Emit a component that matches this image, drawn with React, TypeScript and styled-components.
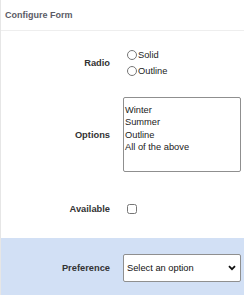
import styled, { createGlobalStyle } from "styled-components"

const GlobalStyle = createGlobalStyle`
  html, body {
    margin: 0;
    padding: 0;
    background: #ffffff;
  }
  body {
    font-family: "Liberation Sans", Arial, sans-serif;
    color: #333333;
  }
`

const Panel = styled.div`
  width: 244px;
  height: 295px;
  box-sizing: border-box;
  border-left: 1px solid #e6e6e6;
  display: flex;
  flex-direction: column;
  overflow: hidden;
`

const PanelHeader = styled.div`
  height: 30px;
  flex-shrink: 0;
  display: flex;
  align-items: center;
  padding: 0 4px;
  border-bottom: 1px solid #eeeeee;
  font-size: 9px;
  font-weight: bold;
  color: #5b5b66;
`

const Row = styled.div<{ $pt: number; $pb: number }>`
  display: grid;
  grid-template-columns: 109px 118px;
  column-gap: 13px;
  align-items: center;
  padding: ${(p) => p.$pt}px 0 ${(p) => p.$pb}px;
`

const Shaded = styled.div`
  flex: 1;
  background: #d2e0f5;
`

const Label = styled.label`
  text-align: right;
  font-size: 9.3px;
  font-weight: bold;
  color: #333333;
`

const RadioGroup = styled.div`
  display: flex;
  flex-direction: column;
  gap: 4px;
`

const RadioOption = styled.label`
  display: flex;
  align-items: center;
  font-size: 9.3px;
  color: #222;
  height: 12px;

  input {
    width: 10px;
    height: 10px;
    margin: 0 1px 0 4px;
  }
`

const ListBox = styled.select`
  width: 118px;
  height: 75px;
  box-sizing: border-box;
  padding: 6px 0;
  border: 1px solid #8f8f8f;
  border-radius: 2px;
  font-family: "Liberation Sans", Arial, sans-serif;
  font-size: 9.3px;
  color: #222;
  overflow: hidden;
  outline: none;

  option {
    padding: 1px 1px 0.3px;
  }
`

const CheckCell = styled.div`
  height: 24px;
  display: flex;
  align-items: center;
`

const Check = styled.input`
  width: 10px;
  height: 10px;
  margin: 0 0 0 4px;
`

const SelectWrap = styled.div`
  position: relative;
  width: 118px;
  height: 28px;

  svg {
    position: absolute;
    right: 5px;
    top: 11px;
    pointer-events: none;
  }
`

const Dropdown = styled.select`
  appearance: none;
  width: 118px;
  height: 28px;
  box-sizing: border-box;
  border: 1px solid #8f8f8f;
  border-radius: 2px;
  background: #ffffff;
  font-family: "Liberation Sans", Arial, sans-serif;
  font-size: 9.3px;
  color: #111;
  padding: 0 3px;
  outline: none;
`

export default function App() {
  return (
    <>
      <GlobalStyle />
      <Panel>
        <PanelHeader>Configure Form</PanelHeader>
        <Row $pt={18} $pb={20}>
          <Label>Radio</Label>
          <RadioGroup>
            <RadioOption>
              <input type="radio" name="style" />
              Solid
            </RadioOption>
            <RadioOption>
              <input type="radio" name="style" />
              Outline
            </RadioOption>
          </RadioGroup>
        </Row>
        <Row $pt={0} $pb={25}>
          <Label>Options</Label>
          <ListBox multiple>
            <option>Winter</option>
            <option>Summer</option>
            <option>Outline</option>
            <option>All of the above</option>
          </ListBox>
        </Row>
        <Row $pt={0} $pb={17}>
          <Label>Available</Label>
          <CheckCell>
            <Check type="checkbox" />
          </CheckCell>
        </Row>
        <Shaded>
          <Row $pt={16} $pb={0}>
            <Label>Preference</Label>
            <SelectWrap>
              <Dropdown defaultValue="">
                <option value="">Select an option</option>
                <option value="a">Solid</option>
                <option value="b">Outline</option>
              </Dropdown>
              <svg width="8" height="6" viewBox="0 0 8 6">
                <path d="M1 1.2 L4 4.2 L7 1.2" fill="none" stroke="#111" strokeWidth="1.8" />
              </svg>
            </SelectWrap>
          </Row>
        </Shaded>
      </Panel>
    </>
  )
}
